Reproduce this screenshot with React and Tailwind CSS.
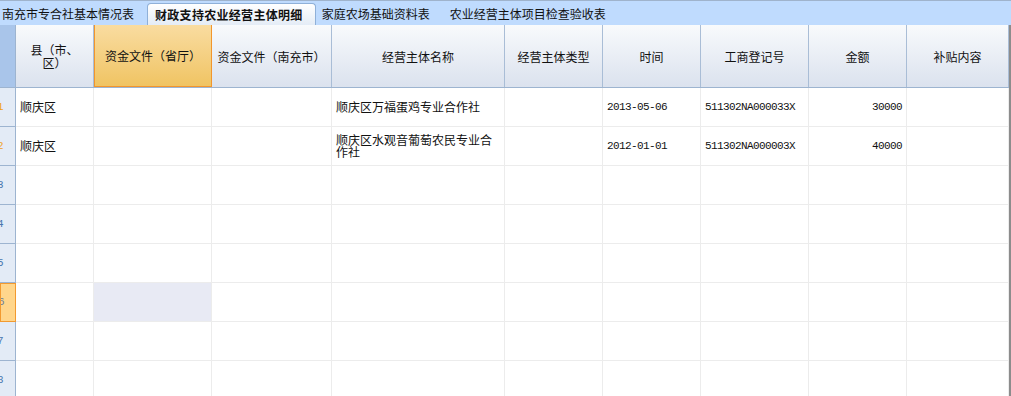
const cols = [
  { w: "w-[78px]", label: "县（市、区）", wrap: "px-[14px]" },
  { w: "w-[118px]", label: "资金文件（省厅）", active: true },
  { w: "w-[120px]", label: "资金文件（南充市）" },
  { w: "w-[173px]", label: "经营主体名称" },
  { w: "w-[98px]", label: "经营主体类型" },
  { w: "w-[98px]", label: "时间" },
  { w: "w-[108px]", label: "工商登记号" },
  { w: "w-[98px]", label: "金额" },
  { w: "w-[102px]", label: "补贴内容" },
];

const rows = [
  ["顺庆区", "", "", "顺庆区万福蛋鸡专业合作社", "", "2013-05-06", "511302NA000033X", "30000", ""],
  ["顺庆区", "", "", "顺庆区水观音葡萄农民专业合作社", "", "2012-01-01", "511302NA000003X", "40000", ""],
  [], [], [], [], [], [],
];

const cjk = "font-['SimSun','Noto_Sans_CJK_SC',sans-serif]";
const mono = "font-['Liberation_Mono',monospace] text-[11px] tracking-[-0.6px]";

export default function App() {
  return (
    <div className={`w-[1011px] h-[396px] overflow-hidden bg-white text-[12px] text-[#111] ${cjk}`}>
      {/* sheet tabs */}
      <div className="flex h-[25px] items-end border-t border-[#9fb3cc] bg-[#bfdbfe] pl-[2px]">
        <div className="flex h-[24px] items-center pt-[1px]">南充市专合社基本情况表</div>
        <div className="ml-[13px] flex h-[22px] items-center rounded-t-[4px] border border-b-0 border-[#8fb0d8] bg-gradient-to-b from-white to-[#e4ecf6] pl-[7px] pr-[12px] font-bold tracking-[0.3px]">
          财政支持农业经营主体明细
        </div>
        <div className="ml-[6px] flex h-[24px] items-center pt-[1px]">家庭农场基础资料表</div>
        <div className="ml-[20px] flex h-[24px] items-center pt-[1px]">农业经营主体项目检查验收表</div>
      </div>

      <div className="flex">
        <div className="w-[1009px]">
          {/* header */}
          <div className="flex h-[63px] border-b border-[#9db4d0]">
            <div className="w-[16px] shrink-0 border-r border-[#9db4d0] bg-[#a9c5ea]" />
            {cols.map((c) => (
              <div
                key={c.label}
                className={`${c.w} shrink-0 flex items-center justify-center text-center leading-[13px] ${c.wrap || "px-[2px]"} ${
                  c.active
                    ? "border border-t-0 border-[#f2962c] bg-gradient-to-b from-[#f9dca0] to-[#f0c462]"
                    : "border-r border-[#a9bdd6] bg-gradient-to-b from-[#f8fafc] to-[#dbe2ee]"
                }`}
              >
                {c.label}
              </div>
            ))}
          </div>

          {/* rows */}
          {rows.map((r, ri) => {
            const sel = ri === 5;
            return (
              <div key={ri} className="flex h-[39px]">
                <div
                  className={`w-[16px] shrink-0 overflow-hidden flex items-center ${mono} ${
                    sel
                      ? "border border-[#f29a30] bg-[#ffd68c] text-[#6d7f99]"
                      : ri < 2
                      ? "border-r border-b border-[#9db4d0] bg-[#e3ebf6] text-[#f0a020]"
                      : "border-r border-b border-[#9db4d0] bg-[#e3ebf6] text-[#4a78b0]"
                  }`}
                >
                  <span className="-ml-[3px]">{ri + 1}</span>
                </div>
                {cols.map((c, ci) => {
                  const v = r[ci] || "";
                  const isNum = ci >= 5;
                  return (
                    <div
                      key={ci}
                      className={`${c.w} shrink-0 flex items-center border-r border-b border-[#ececec] px-[4px] leading-[12px] ${
                        ci === 7 ? "justify-end" : ""
                      } ${sel && ci === 1 ? "bg-[#e8eaf4]" : ""} ${isNum ? mono : ""}`}
                    >
                      <span>{v}</span>
                    </div>
                  );
                })}
              </div>
            );
          })}
        </div>
        <div className="w-[2px] h-[400px] bg-[#8c8c8c]" />
      </div>
    </div>
  );
}
